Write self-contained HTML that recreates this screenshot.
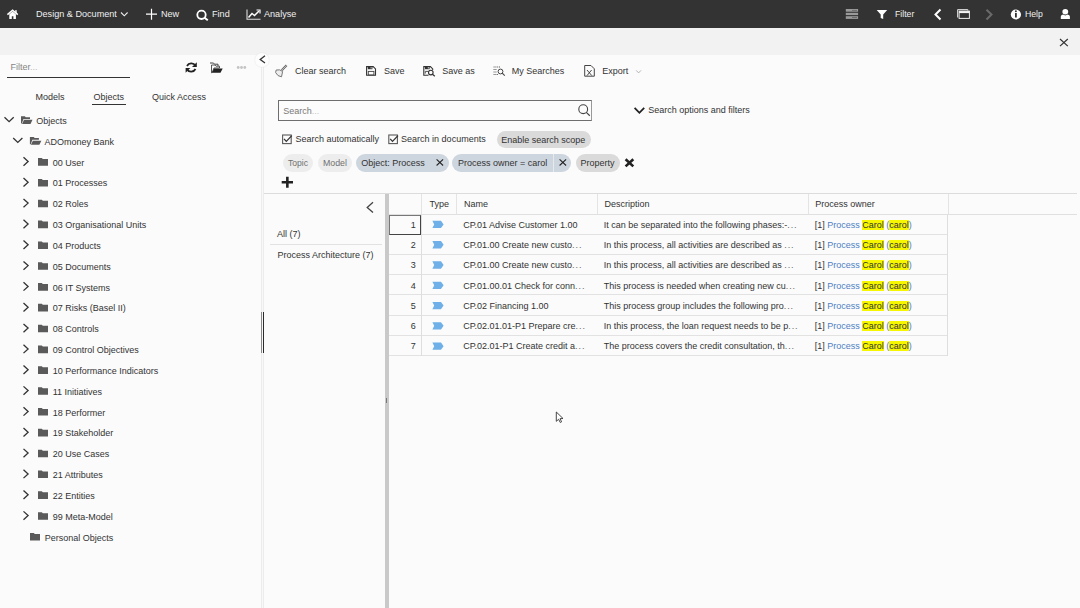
<!DOCTYPE html>
<html><head><meta charset="utf-8"><style>
*{margin:0;padding:0;box-sizing:border-box}
html,body{width:1080px;height:608px;overflow:hidden;background:#fbfbfb;font-family:"Liberation Sans",sans-serif;color:#333}
.a{position:absolute}
.t{position:absolute;font-size:9px;line-height:12px;white-space:nowrap}
svg{position:absolute;left:0;top:0;overflow:visible}
</style></head><body>
<div class="a" style="left:0;top:0;width:1080px;height:27.5px;background:#333"></div>
<div class="a" style="left:0;top:27.5px;width:1080px;height:27.5px;background:#f2f2f2"></div>
<div class="t" style="left:36px;top:8.00px;color:#f0f0f0;font-size:9.1px">Design &amp; Document</div>
<div class="t" style="left:161px;top:8.00px;color:#f0f0f0;font-size:9.1px">New</div>
<div class="t" style="left:212px;top:8.00px;color:#f0f0f0;font-size:9.1px">Find</div>
<div class="t" style="left:264px;top:8.00px;color:#f0f0f0;font-size:9.1px">Analyse</div>
<div class="t" style="left:895px;top:8.00px;color:#f0f0f0;font-size:9.1px;font-size:8.7px">Filter</div>
<div class="t" style="left:1025px;top:8.00px;color:#f0f0f0;font-size:9.1px;font-size:8.7px">Help</div>
<svg width="1080" height="60">
<path d="M7.4 14.6 L12.6 10.2 L17.8 14.6" fill="none" stroke="#fff" stroke-width="1.5"/>
<path d="M9.3 14.2 L12.6 11.6 L15.9 14.2 V19 H13.4 V16.2 H11.8 V19 H9.3 Z" fill="#fff"/>
<rect x="15.2" y="10.2" width="1.5" height="3" fill="#fff"/>
<path d="M121 12.5 L124.3 15.8 L127.6 12.5" fill="none" stroke="#eee" stroke-width="1.1"/>
<path d="M146 14.2 H157 M151.5 8.8 V19.7" stroke="#fff" stroke-width="1.2"/>
<circle cx="201.5" cy="14.8" r="4.2" fill="none" stroke="#fff" stroke-width="1.8"/><path d="M204.5 17.8 L207.8 20.3" stroke="#fff" stroke-width="2"/>
<path d="M247 9.5 V19.2 H260.5" fill="none" stroke="#ddd" stroke-width="1.1"/><path d="M248.5 17.5 L252 13.5 L254.5 15.5 L259 11" fill="none" stroke="#fff" stroke-width="1.5"/><path d="M256.5 10 H260 V13.5" fill="none" stroke="#fff" stroke-width="1.2"/>
<rect x="845.8" y="9" width="12.3" height="2.7" fill="#9a9a9a"/>
<rect x="845.8" y="12.8" width="12.3" height="2.3" fill="#9a9a9a"/>
<rect x="845.8" y="16.2" width="12.3" height="2.7" fill="#9a9a9a"/>
<rect x="852" y="9.9" width="5" height="0.9" fill="#6a6a6a"/>
<rect x="852" y="17.1" width="5" height="0.9" fill="#6a6a6a"/>
<path d="M876.7 10 H887.2 L883.2 14.5 V19 L880.7 18 V14.5 Z" fill="#fff"/>
<path d="M940.5 9.5 L935.5 14.5 L940.5 19.5" fill="none" stroke="#fff" stroke-width="2"/>
<path d="M957.6 17.5 V9.6 H967.8 V10.5" fill="none" stroke="#ddd" stroke-width="1"/>
<rect x="959.1" y="11.1" width="10.3" height="7.3" fill="none" stroke="#eee" stroke-width="1"/>
<rect x="959.1" y="11.1" width="10.3" height="2" fill="#f4f4f4"/>
<path d="M986.5 9.8 L991.5 14.5 L986.5 19.5" fill="none" stroke="#6a6a6a" stroke-width="2"/>
<circle cx="1015.9" cy="14.5" r="5.1" fill="#fff"/>
<rect x="1015" y="13" width="1.8" height="4.5" fill="#333"/>
<circle cx="1015.9" cy="11.3" r="1" fill="#333"/>
<ellipse cx="1065.3" cy="11.8" rx="2.9" ry="2.7" fill="#fff"/>
<path d="M1060.8 19 V16.6 Q1060.8 14.6 1063 14.4 L1065.3 15.6 L1067.6 14.4 Q1069.9 14.6 1069.9 16.6 V19 Z" fill="#fff"/>
<path d="M1060 39 L1067.8 46.1 M1067.8 39 L1060 46.1" stroke="#333" stroke-width="1.2"/>
</svg>
<div class="t" style="left:10.6px;top:61.30px;color:#858585">Filter<span style="color:#bbb">...</span></div>
<div class="a" style="left:7px;top:77px;width:123px;height:1.4px;background:#333"></div>
<div class="t" style="left:35.6px;top:91.00px;">Models</div>
<div class="t" style="left:93.5px;top:91.00px;">Objects</div>
<div class="t" style="left:152px;top:91.00px;">Quick Access</div>
<div class="a" style="left:92px;top:104px;width:33.6px;height:1.4px;background:#333"></div>
<div class="t" style="left:36.3px;top:115.00px;">Objects</div>
<div class="t" style="left:44.599999999999994px;top:135.83px;">ADOmoney Bank</div>
<div class="t" style="left:52.75px;top:156.66px;">00 User</div>
<div class="t" style="left:52.75px;top:177.49px;">01 Processes</div>
<div class="t" style="left:52.75px;top:198.32px;">02 Roles</div>
<div class="t" style="left:52.75px;top:219.15px;">03 Organisational Units</div>
<div class="t" style="left:52.75px;top:239.98px;">04 Products</div>
<div class="t" style="left:52.75px;top:260.81px;">05 Documents</div>
<div class="t" style="left:52.75px;top:281.64px;">06 IT Systems</div>
<div class="t" style="left:52.75px;top:302.47px;">07 Risks (Basel II)</div>
<div class="t" style="left:52.75px;top:323.30px;">08 Controls</div>
<div class="t" style="left:52.75px;top:344.13px;">09 Control Objectives</div>
<div class="t" style="left:52.75px;top:364.96px;">10 Performance Indicators</div>
<div class="t" style="left:52.75px;top:385.79px;">11 Initiatives</div>
<div class="t" style="left:52.75px;top:406.62px;">18 Performer</div>
<div class="t" style="left:52.75px;top:427.45px;">19 Stakeholder</div>
<div class="t" style="left:52.75px;top:448.28px;">20 Use Cases</div>
<div class="t" style="left:52.75px;top:469.11px;">21 Attributes</div>
<div class="t" style="left:52.75px;top:489.94px;">22 Entities</div>
<div class="t" style="left:52.75px;top:510.77px;">99 Meta-Model</div>
<div class="t" style="left:44.75px;top:531.60px;">Personal Objects</div>
<div class="a" style="left:261px;top:66px;width:3px;height:542px;background:#ececec"></div>
<div class="a" style="left:262px;top:66px;width:1px;height:542px;background:#f8f8f8"></div>
<div class="a" style="left:261px;top:312px;width:1.2px;height:40.5px;background:#888"></div>
<div class="a" style="left:262.6px;top:312px;width:1.2px;height:40.5px;background:#2a2a2a"></div>
<div class="a" style="left:254.8px;top:52.6px;width:14.4px;height:14.4px;border-radius:50%;background:#fdfdfd;box-shadow:0 0 1.5px #ddd"></div>
<div class="t" style="left:295px;top:64.80px;">Clear search</div>
<div class="t" style="left:383.9px;top:64.80px;">Save</div>
<div class="t" style="left:442.2px;top:64.80px;">Save as</div>
<div class="t" style="left:511.7px;top:64.80px;">My Searches</div>
<div class="t" style="left:602.3px;top:64.80px;">Export</div>
<div class="a" style="left:278.4px;top:100.4px;width:313.6px;height:20.2px;border:1px solid #6e6e6e;border-right-color:#999;background:#fcfcfc"></div>
<div class="t" style="left:283.3px;top:105.30px;color:#7a7a7a">Search<span style="color:#c4c4c4">...</span></div>
<div class="t" style="left:648.3px;top:104.00px;">Search options and filters</div>
<div class="t" style="left:295.4px;top:132.60px;">Search automatically</div>
<div class="t" style="left:401.1px;top:132.60px;">Search in documents</div>
<div class="a" style="left:497px;top:131px;width:94px;height:16.7px;border-radius:9px;background:#dadada"></div>
<div class="t" style="left:501.3px;top:133.50px;">Enable search scope</div>
<div class="a" style="left:282.5px;top:154px;width:30.5px;height:17.5px;border-radius:9px;background:#ededed"></div>
<div class="t" style="left:288px;top:156.60px;color:#707070;font-size:8.6px">Topic</div>
<div class="a" style="left:318px;top:154px;width:33.7px;height:17.5px;border-radius:9px;background:#ededed"></div>
<div class="t" style="left:323px;top:156.60px;color:#707070;font-size:8.8px">Model</div>
<div class="a" style="left:356.2px;top:154px;width:93.0px;height:17.5px;border-radius:9px;background:#cdd5de"></div>
<div class="t" style="left:361.3px;top:156.60px;">Object: Process</div>
<div class="a" style="left:452.4px;top:154px;width:119.1px;height:17.5px;border-radius:9px;background:#cdd5de"></div>
<div class="t" style="left:458px;top:156.60px;">Process owner = carol</div>
<div class="a" style="left:553px;top:154px;width:1px;height:17.5px;background:#e6eaef"></div>
<div class="a" style="left:575.6px;top:154px;width:44.4px;height:17.5px;border-radius:9px;background:#dadada"></div>
<div class="t" style="left:580.5px;top:156.60px;">Property</div>
<div class="a" style="left:264px;top:193px;width:813px;height:1px;background:#dcdcdc"></div>
<div class="t" style="left:277.1px;top:228.00px;">All (7)</div>
<div class="a" style="left:270px;top:244px;width:112px;height:1px;background:#e2e2e2"></div>
<div class="t" style="left:277.4px;top:249.40px;">Process Architecture (7)</div>
<div class="a" style="left:385px;top:194px;width:4px;height:414px;background:#c9c9c9"></div>
<div class="a" style="left:386.2px;top:397.5px;width:1px;height:5px;background:#777"></div>
<div class="a" style="left:389px;top:213.6px;width:688px;height:1px;background:#e0e0e0"></div>
<div class="a" style="left:421px;top:194px;width:1px;height:20px;background:#e4e4e4"></div>
<div class="a" style="left:455.5px;top:194px;width:1px;height:20px;background:#e4e4e4"></div>
<div class="a" style="left:596.5px;top:194px;width:1px;height:20px;background:#e4e4e4"></div>
<div class="a" style="left:807.5px;top:194px;width:1px;height:20px;background:#e4e4e4"></div>
<div class="a" style="left:948px;top:194px;width:1px;height:20px;background:#e4e4e4"></div>
<div class="t" style="left:429.5px;top:197.90px;">Type</div>
<div class="t" style="left:463.9px;top:197.90px;">Name</div>
<div class="t" style="left:604.5px;top:197.90px;">Description</div>
<div class="t" style="left:815.3px;top:197.90px;">Process owner</div>
<div class="a" style="left:389px;top:233.71px;width:559px;height:1px;background:#e2e2e2"></div>
<div class="t" style="left:395px;top:218.70px;width:20.7px;text-align:right">1</div>
<div class="t" style="left:463.2px;top:218.70px;">CP.01 Advise Customer 1.00</div>
<div class="t" style="left:603.7px;top:218.70px;">It can be separated into the following phases:-<span style="letter-spacing:0.9px;color:#666">...</span></div>
<div class="t" style="left:814.7px;top:218.70px;">[1] <span style="color:#4f7fc4">Process</span> <span style="background:#f6f600">Carol</span> <span style="color:#4f7fc4">(</span><span style="background:#f6f600">carol</span><span style="color:#4f7fc4">)</span></div>
<div class="a" style="left:389px;top:253.92px;width:559px;height:1px;background:#e2e2e2"></div>
<div class="t" style="left:395px;top:238.98px;width:20.7px;text-align:right">2</div>
<div class="t" style="left:463.2px;top:238.98px;">CP.01.00 Create new custo<span style="letter-spacing:0.9px;color:#666">...</span></div>
<div class="t" style="left:603.7px;top:238.98px;">In this process, all activities are described as <span style="letter-spacing:0.9px;color:#666">...</span></div>
<div class="t" style="left:814.7px;top:238.98px;">[1] <span style="color:#4f7fc4">Process</span> <span style="background:#f6f600">Carol</span> <span style="color:#4f7fc4">(</span><span style="background:#f6f600">carol</span><span style="color:#4f7fc4">)</span></div>
<div class="a" style="left:389px;top:274.13px;width:559px;height:1px;background:#e2e2e2"></div>
<div class="t" style="left:395px;top:259.26px;width:20.7px;text-align:right">3</div>
<div class="t" style="left:463.2px;top:259.26px;">CP.01.00 Create new custo<span style="letter-spacing:0.9px;color:#666">...</span></div>
<div class="t" style="left:603.7px;top:259.26px;">In this process, all activities are described as <span style="letter-spacing:0.9px;color:#666">...</span></div>
<div class="t" style="left:814.7px;top:259.26px;">[1] <span style="color:#4f7fc4">Process</span> <span style="background:#f6f600">Carol</span> <span style="color:#4f7fc4">(</span><span style="background:#f6f600">carol</span><span style="color:#4f7fc4">)</span></div>
<div class="a" style="left:389px;top:294.34px;width:559px;height:1px;background:#e2e2e2"></div>
<div class="t" style="left:395px;top:279.54px;width:20.7px;text-align:right">4</div>
<div class="t" style="left:463.2px;top:279.54px;">CP.01.00.01 Check for conn<span style="letter-spacing:0.9px;color:#666">...</span></div>
<div class="t" style="left:603.7px;top:279.54px;">This process is needed when creating new cu<span style="letter-spacing:0.9px;color:#666">...</span></div>
<div class="t" style="left:814.7px;top:279.54px;">[1] <span style="color:#4f7fc4">Process</span> <span style="background:#f6f600">Carol</span> <span style="color:#4f7fc4">(</span><span style="background:#f6f600">carol</span><span style="color:#4f7fc4">)</span></div>
<div class="a" style="left:389px;top:314.55px;width:559px;height:1px;background:#e2e2e2"></div>
<div class="t" style="left:395px;top:299.82px;width:20.7px;text-align:right">5</div>
<div class="t" style="left:463.2px;top:299.82px;">CP.02 Financing 1.00</div>
<div class="t" style="left:603.7px;top:299.82px;">This process group includes the following pro<span style="letter-spacing:0.9px;color:#666">...</span></div>
<div class="t" style="left:814.7px;top:299.82px;">[1] <span style="color:#4f7fc4">Process</span> <span style="background:#f6f600">Carol</span> <span style="color:#4f7fc4">(</span><span style="background:#f6f600">carol</span><span style="color:#4f7fc4">)</span></div>
<div class="a" style="left:389px;top:334.76px;width:559px;height:1px;background:#e2e2e2"></div>
<div class="t" style="left:395px;top:320.10px;width:20.7px;text-align:right">6</div>
<div class="t" style="left:463.2px;top:320.10px;">CP.02.01.01-P1 Prepare cre<span style="letter-spacing:0.9px;color:#666">...</span></div>
<div class="t" style="left:603.7px;top:320.10px;">In this process, the loan request needs to be p<span style="letter-spacing:0.9px;color:#666">...</span></div>
<div class="t" style="left:814.7px;top:320.10px;">[1] <span style="color:#4f7fc4">Process</span> <span style="background:#f6f600">Carol</span> <span style="color:#4f7fc4">(</span><span style="background:#f6f600">carol</span><span style="color:#4f7fc4">)</span></div>
<div class="a" style="left:389px;top:354.97px;width:559px;height:1px;background:#e2e2e2"></div>
<div class="t" style="left:395px;top:340.38px;width:20.7px;text-align:right">7</div>
<div class="t" style="left:463.2px;top:340.38px;">CP.02.01-P1 Create credit a<span style="letter-spacing:0.9px;color:#666">...</span></div>
<div class="t" style="left:603.7px;top:340.38px;">The process covers the credit consultation, th<span style="letter-spacing:0.9px;color:#666">...</span></div>
<div class="t" style="left:814.7px;top:340.38px;">[1] <span style="color:#4f7fc4">Process</span> <span style="background:#f6f600">Carol</span> <span style="color:#4f7fc4">(</span><span style="background:#f6f600">carol</span><span style="color:#4f7fc4">)</span></div>
<div class="a" style="left:420.5px;top:214.5px;width:1px;height:141.5px;background:#dedede"></div>
<div class="a" style="left:947px;top:214.5px;width:1px;height:141.5px;background:#dedede"></div>
<div class="a" style="left:388.6px;top:215.3px;width:32.4px;height:20px;border:1px solid #444;border-top-color:#777;border-left-color:#777"></div>
<svg width="1080" height="608"><path d="M187 66 A5 5 0 0 1 195.5 65.5" fill="none" stroke="#222" stroke-width="1.8"/><path d="M196.8 62.2 V67 H192 Z" fill="#222"/><path d="M195.5 69 A5 5 0 0 1 187 69.5" fill="none" stroke="#222" stroke-width="1.8"/><path d="M185.6 72.8 V68 H190.4 Z" fill="#222"/><path d="M210 63 H213.5 L214.5 64.2 H218 V66" fill="none" stroke="#444" stroke-width="1"/><path d="M211.5 65 H215 L216 66.2 H219.5 V68 H214 L212 72.8 H211.5 Z" fill="none" stroke="#444" stroke-width="0.9"/><path d="M214 68.5 H222.7 L220.5 72.8 H212 Z" fill="#222"/><circle cx="238.2" cy="67.5" r="1.4" fill="#c4c4c4"/><circle cx="241.5" cy="67.5" r="1.4" fill="#c4c4c4"/><circle cx="244.8" cy="67.5" r="1.4" fill="#c4c4c4"/><path d="M4.5 117.2 L9.1 121.6 L13.7 117.2" fill="none" stroke="#333" stroke-width="1.3"/><path d="M21.0 116.2 H24.8 L25.8 117.2 H30.0 V119.0 H23.5 L21.8 123.5 H21.0 Z" fill="#5a5a5a"/><path d="M24.0 119.8 H32.5 L30.5 124.0 H22.0 Z" fill="#5a5a5a"/><path d="M13.2 138.02999999999997 L17.799999999999997 142.42999999999998 L22.4 138.02999999999997" fill="none" stroke="#333" stroke-width="1.3"/><path d="M29.9 137.02999999999997 H33.699999999999996 L34.699999999999996 138.02999999999997 H38.9 V139.82999999999998 H32.4 L30.7 144.32999999999998 H29.9 Z" fill="#5a5a5a"/><path d="M32.9 140.63 H41.4 L39.4 144.82999999999998 H30.9 Z" fill="#5a5a5a"/><path d="M23.5 157.26 L28.1 161.46 L23.5 165.66" fill="none" stroke="#333" stroke-width="1.3"/><path d="M38 158.06 H41.8 L42.8 159.06 H48 V165.66 H38 Z" fill="#5a5a5a"/><path d="M23.5 178.09 L28.1 182.29000000000002 L23.5 186.49" fill="none" stroke="#333" stroke-width="1.3"/><path d="M38 178.89000000000001 H41.8 L42.8 179.89000000000001 H48 V186.49 H38 Z" fill="#5a5a5a"/><path d="M23.5 198.92 L28.1 203.12 L23.5 207.32" fill="none" stroke="#333" stroke-width="1.3"/><path d="M38 199.72 H41.8 L42.8 200.72 H48 V207.32 H38 Z" fill="#5a5a5a"/><path d="M23.5 219.74999999999997 L28.1 223.95 L23.5 228.14999999999998" fill="none" stroke="#333" stroke-width="1.3"/><path d="M38 220.54999999999998 H41.8 L42.8 221.54999999999998 H48 V228.14999999999998 H38 Z" fill="#5a5a5a"/><path d="M23.5 240.57999999999998 L28.1 244.78 L23.5 248.98" fill="none" stroke="#333" stroke-width="1.3"/><path d="M38 241.38 H41.8 L42.8 242.38 H48 V248.98 H38 Z" fill="#5a5a5a"/><path d="M23.5 261.41 L28.1 265.61 L23.5 269.81" fill="none" stroke="#333" stroke-width="1.3"/><path d="M38 262.21 H41.8 L42.8 263.21 H48 V269.81 H38 Z" fill="#5a5a5a"/><path d="M23.5 282.24 L28.1 286.44 L23.5 290.64" fill="none" stroke="#333" stroke-width="1.3"/><path d="M38 283.03999999999996 H41.8 L42.8 284.03999999999996 H48 V290.64 H38 Z" fill="#5a5a5a"/><path d="M23.5 303.07 L28.1 307.27 L23.5 311.46999999999997" fill="none" stroke="#333" stroke-width="1.3"/><path d="M38 303.86999999999995 H41.8 L42.8 304.86999999999995 H48 V311.46999999999997 H38 Z" fill="#5a5a5a"/><path d="M23.5 323.9 L28.1 328.09999999999997 L23.5 332.29999999999995" fill="none" stroke="#333" stroke-width="1.3"/><path d="M38 324.69999999999993 H41.8 L42.8 325.69999999999993 H48 V332.29999999999995 H38 Z" fill="#5a5a5a"/><path d="M23.5 344.73 L28.1 348.93 L23.5 353.13" fill="none" stroke="#333" stroke-width="1.3"/><path d="M38 345.53 H41.8 L42.8 346.53 H48 V353.13 H38 Z" fill="#5a5a5a"/><path d="M23.5 365.56 L28.1 369.76 L23.5 373.96" fill="none" stroke="#333" stroke-width="1.3"/><path d="M38 366.35999999999996 H41.8 L42.8 367.35999999999996 H48 V373.96 H38 Z" fill="#5a5a5a"/><path d="M23.5 386.39 L28.1 390.59 L23.5 394.78999999999996" fill="none" stroke="#333" stroke-width="1.3"/><path d="M38 387.18999999999994 H41.8 L42.8 388.18999999999994 H48 V394.78999999999996 H38 Z" fill="#5a5a5a"/><path d="M23.5 407.22 L28.1 411.42 L23.5 415.62" fill="none" stroke="#333" stroke-width="1.3"/><path d="M38 408.02 H41.8 L42.8 409.02 H48 V415.62 H38 Z" fill="#5a5a5a"/><path d="M23.5 428.05 L28.1 432.25 L23.5 436.45" fill="none" stroke="#333" stroke-width="1.3"/><path d="M38 428.84999999999997 H41.8 L42.8 429.84999999999997 H48 V436.45 H38 Z" fill="#5a5a5a"/><path d="M23.5 448.88 L28.1 453.08 L23.5 457.28" fill="none" stroke="#333" stroke-width="1.3"/><path d="M38 449.67999999999995 H41.8 L42.8 450.67999999999995 H48 V457.28 H38 Z" fill="#5a5a5a"/><path d="M23.5 469.71 L28.1 473.90999999999997 L23.5 478.10999999999996" fill="none" stroke="#333" stroke-width="1.3"/><path d="M38 470.50999999999993 H41.8 L42.8 471.50999999999993 H48 V478.10999999999996 H38 Z" fill="#5a5a5a"/><path d="M23.5 490.53999999999996 L28.1 494.73999999999995 L23.5 498.93999999999994" fill="none" stroke="#333" stroke-width="1.3"/><path d="M38 491.3399999999999 H41.8 L42.8 492.3399999999999 H48 V498.93999999999994 H38 Z" fill="#5a5a5a"/><path d="M23.5 511.37 L28.1 515.5699999999999 L23.5 519.77" fill="none" stroke="#333" stroke-width="1.3"/><path d="M38 512.17 H41.8 L42.8 513.17 H48 V519.77 H38 Z" fill="#5a5a5a"/><path d="M30 532.9999999999999 H33.8 L34.8 533.9999999999999 H40 V540.5999999999999 H30 Z" fill="#5a5a5a"/><path d="M265 55.8 L260.2 59.5 L265 63.1" fill="none" stroke="#333" stroke-width="1.3"/><path d="M286.6 65.3 L281.8 70.3" stroke="#666" stroke-width="2.2"/><path d="M286.6 65.3 L281.8 70.3" stroke="#e0e0e0" stroke-width="0.7"/><path d="M276.2 70 Q280 69 282.6 71.5 L281.5 76.8 Q277.5 76.5 275.6 72.5 Z" fill="#eee" stroke="#777" stroke-width="1"/><path d="M366.6 66.6 H373.2 L375.5 68.9 V75.2 H366.6 Z" fill="none" stroke="#333" stroke-width="1.1"/><rect x="367.8" y="66.6" width="4.6" height="2.6" fill="#333"/><rect x="370.6" y="67.1" width="1" height="1.4" fill="#ddd"/><rect x="368.3" y="71.4" width="5.6" height="3.6" fill="none" stroke="#444" stroke-width="0.9"/><path d="M428.5 75.2 H423.8 V66.6 H430.4 L432.7 68.9 V70" fill="none" stroke="#333" stroke-width="1.1"/><rect x="425" y="66.6" width="4.6" height="2.6" fill="#333"/><rect x="427.8" y="67.1" width="1" height="1.4" fill="#ddd"/><path d="M425.3 73.5 V71.4 H428" fill="none" stroke="#444" stroke-width="0.9"/><circle cx="430.8" cy="72.6" r="2.3" fill="#fbfbfb" stroke="#333" stroke-width="1.1"/><path d="M432.5 74.3 L434.8 76.2" stroke="#333" stroke-width="1.2"/><path d="M493.6 67 H500 M493.6 69.5 H497 M493.6 72 H497 M493.6 74.5 H498" stroke="#444" stroke-width="0.9" stroke-dasharray="1 0.8"/><circle cx="500.5" cy="71.5" r="2.4" fill="none" stroke="#444" stroke-width="1"/><path d="M502.2 73.2 L504.8 75.6" stroke="#444" stroke-width="1.1"/><path d="M584.7 65.5 H591 L594.3 68.8 V76.2 H584.7 Z" fill="none" stroke="#444" stroke-width="1"/><path d="M587 70 L591.8 75.6 M591.6 70 L587 75.6" stroke="#333" stroke-width="0.9"/><path d="M636.2 70.4 L638.6 72.9 L641 70.4" fill="none" stroke="#aaa" stroke-width="0.9"/><circle cx="583.2" cy="109.2" r="4.4" fill="none" stroke="#444" stroke-width="1.1"/><path d="M586.3 112.4 L589.8 115.7" stroke="#444" stroke-width="1.2"/><path d="M634.6 107.8 L639.4 112.8 L644.2 107.8" fill="none" stroke="#222" stroke-width="1.8"/><rect x="282.6" y="135.0" width="8.6" height="8.6" fill="none" stroke="#5a5a5a" stroke-width="1.1"/><path d="M284 138.9 L286.3 141.4 L291.8 135.6" fill="none" stroke="#333" stroke-width="1.3"/><rect x="388.8" y="135.0" width="8.6" height="8.6" fill="none" stroke="#5a5a5a" stroke-width="1.1"/><path d="M390.2 138.9 L392.5 141.4 L398.0 135.6" fill="none" stroke="#333" stroke-width="1.3"/><path d="M436.6 159.4 L443.1 165.5 M443.1 159.4 L436.6 165.5" stroke="#222" stroke-width="1.05"/><path d="M559.6 159.4 L566.1 165.5 M566.1 159.4 L559.6 165.5" stroke="#222" stroke-width="1.05"/><path d="M625.6 159.2 L633.3 166.4 M633.3 159.2 L625.6 166.4" stroke="#222" stroke-width="2.6"/><path d="M281.7 182.2 H293 M287.35 176.7 V187.7" stroke="#222" stroke-width="2.6"/><path d="M373 202.2 L367.2 207.4 L373 212.6" fill="none" stroke="#444" stroke-width="1.3"/><path d="M432.4 220.79999999999998 H441 L443.6 224.45 L441 228.1 H432.4 L434.2 224.45 Z" fill="#6fb0e8"/><path d="M432.4 241.07999999999998 H441 L443.6 244.73 L441 248.38 H432.4 L434.2 244.73 Z" fill="#6fb0e8"/><path d="M432.4 261.36 H441 L443.6 265.01 L441 268.65999999999997 H432.4 L434.2 265.01 Z" fill="#6fb0e8"/><path d="M432.4 281.64 H441 L443.6 285.28999999999996 L441 288.93999999999994 H432.4 L434.2 285.28999999999996 Z" fill="#6fb0e8"/><path d="M432.4 301.92 H441 L443.6 305.57 L441 309.21999999999997 H432.4 L434.2 305.57 Z" fill="#6fb0e8"/><path d="M432.4 322.20000000000005 H441 L443.6 325.85 L441 329.5 H432.4 L434.2 325.85 Z" fill="#6fb0e8"/><path d="M432.4 342.48 H441 L443.6 346.13 L441 349.78 H432.4 L434.2 346.13 Z" fill="#6fb0e8"/><path d="M556.3 412 V421.3 L558.6 419.3 L560.3 422.5 L561.6 421.8 L560 418.7 L563 418.5 Z" fill="#fff" stroke="#333" stroke-width="0.9" stroke-linejoin="round"/></svg>
</body></html>
